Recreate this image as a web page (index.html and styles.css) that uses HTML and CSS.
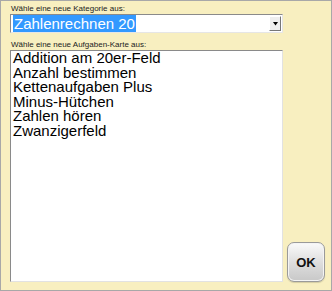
FILE: index.html
```html
<!DOCTYPE html>
<html lang="de">
<head>
    <meta charset="UTF-8">
    <title>Kategorie wählen</title>
    <link rel="stylesheet" href="styles.css">
</head>
<body>
    <div class="panel">
        <div class="form">
            <label class="caption">Wähle eine neue Kategorie aus:</label>
            <div class="combo">
                <span class="combo-value"><span class="selected">Zahlenrechnen 20</span></span>
                <span class="combo-button">
                    <svg width="5" height="4" viewBox="0 0 5 4"><path d="M0 0H5L2.5 3.5Z" fill="#000"/></svg>
                </span>
            </div>
            <label class="caption caption-list">Wähle eine neue Aufgaben-Karte aus:</label>
            <ul class="list">
                <li>Addition am 20er-Feld</li>
                <li>Anzahl bestimmen</li>
                <li>Kettenaufgaben Plus</li>
                <li>Minus-Hütchen</li>
                <li>Zahlen hören</li>
                <li>Zwanzigerfeld</li>
            </ul>
        </div>
        <div class="side">
            <button class="ok">OK</button>
        </div>
    </div>
</body>
</html>
```

FILE: styles.css
```css
/* Auswahl-Dialog */
body {
    margin: 0;
    padding: 0;
    font-family: "Liberation Sans", Arial, sans-serif;
}
.panel {
    width: 332px;
    height: 291px;
    box-sizing: border-box;
    background-color: #f8efc0; /* Helles Gelb */
    border: 1px solid #a8a8a8;
    display: flex;
    padding: 4px 6px 8px 9px;
}
.form {
    width: 273px;
    display: flex;
    flex-direction: column;
}
.caption {
    font-size: 8px;
    color: #222;
    line-height: 8px;
    padding-left: 1px;
    margin-bottom: 1px;
}
.caption-list {
    margin-top: 8px;
}
.combo {
    height: 19px;
    box-sizing: border-box;
    background-color: #fff;
    border: 1px solid #8a8a8a;
    border-right-color: #e6e6e6;
    border-bottom-color: #e6e6e6;
    display: flex;
    align-items: center;
}
.combo-value {
    flex: 1;
    padding-left: 2px;
    font-size: 15px;
}
.selected {
    background-color: #3399ff;
    color: #fff;
    padding: 0 1px;
}
.combo-button {
    width: 12px;
    height: 15px;
    margin-right: 1px;
    box-sizing: border-box;
    background-color: #eee;
    border: 1px solid #fff;
    border-right-color: #777;
    border-bottom-color: #777;
    display: flex;
    align-items: center;
    justify-content: center;
}
.list {
    flex: 1;
    list-style: none;
    margin: 0;
    padding: 0 2px;
    background-color: #fff;
    border: 1px solid #8a8a8a;
    border-right-color: #e2e2e2;
    border-bottom-color: #e2e2e2;
    font-size: 15px;
    line-height: 14.6px;
    color: #000;
}
.side {
    flex: 1;
    display: flex;
    align-items: flex-end;
    justify-content: flex-end;
}
.ok {
    width: 38px;
    height: 40px;
    border: 1px solid #9a9a9a;
    border-radius: 7px;
    background: linear-gradient(#fafafa, #dcdcdc 55%, #c8c8c8);
    box-shadow: inset 0 0 0 1px #f4f4f4, 0 1px 1px rgba(0, 0, 0, 0.15);
    font-family: "Liberation Sans", Arial, sans-serif;
    font-weight: bold;
    font-size: 13px;
    color: #111;
    padding: 0;
}
```
